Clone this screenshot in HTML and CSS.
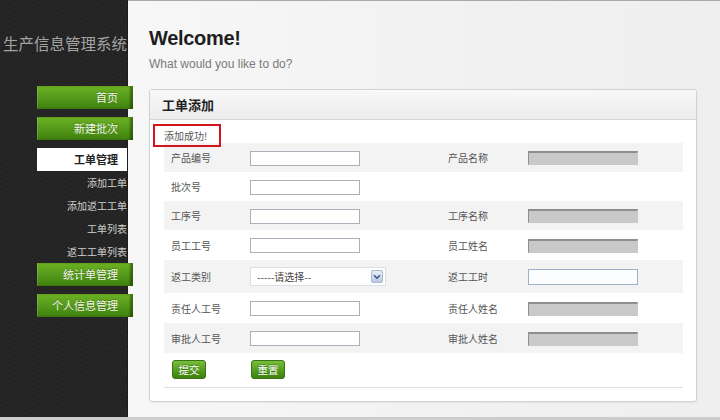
FILE: index.html
```html
<!DOCTYPE html>
<html lang="zh-CN">
<head>
<meta charset="utf-8">
<title>生产信息管理系统</title>
<link rel="stylesheet" href="styles.css">
</head>
<body>
<div class="page">
  <aside class="sidebar">
    <div class="brand">生产信息管理系统</div>
    <nav class="nav">
      <a class="nav-btn">首页</a>
      <a class="nav-btn">新建批次</a>
      <a class="nav-active">工单管理</a>
      <ul class="subnav">
        <li>添加工单</li>
        <li>添加返工工单</li>
        <li>工单列表</li>
        <li>返工工单列表</li>
      </ul>
      <a class="nav-btn">统计单管理</a>
      <a class="nav-btn">个人信息管理</a>
    </nav>
  </aside>
  <main class="main">
    <h1 class="welcome">Welcome!</h1>
    <p class="lead">What would you like to do?</p>
    <section class="panel">
      <div class="panel-head">工单添加</div>
      <div class="panel-body">
        <div class="msg">添加成功!<span class="annot"></span></div>
        <table class="form">
          <tr class="r29 alt">
            <td class="lbl">产品编号</td><td class="fld"><span class="inp"></span></td>
            <td class="lbl">产品名称</td><td class="fld"><span class="inp ro"></span></td>
          </tr>
          <tr class="r29">
            <td class="lbl">批次号</td><td class="fld"><span class="inp"></span></td>
            <td class="lbl"></td><td class="fld"></td>
          </tr>
          <tr class="r29 alt">
            <td class="lbl">工序号</td><td class="fld"><span class="inp"></span></td>
            <td class="lbl">工序名称</td><td class="fld"><span class="inp ro"></span></td>
          </tr>
          <tr class="r30">
            <td class="lbl">员工工号</td><td class="fld"><span class="inp"></span></td>
            <td class="lbl">员工姓名</td><td class="fld"><span class="inp ro"></span></td>
          </tr>
          <tr class="r33 alt">
            <td class="lbl">返工类别</td>
            <td class="fld">
              <div class="select"><span class="sel-text">-----请选择--</span><span class="sel-arrow"><svg width="8" height="6" viewBox="0 0 8 6"><path d="M1 1.2 L4 4.2 L7 1.2" fill="none" stroke="#3d5585" stroke-width="1.6"/></svg></span></div>
            </td>
            <td class="lbl">返工工时</td><td class="fld"><span class="inp blue"></span></td>
          </tr>
          <tr class="r30">
            <td class="lbl">责任人工号</td><td class="fld"><span class="inp"></span></td>
            <td class="lbl">责任人姓名</td><td class="fld"><span class="inp ro"></span></td>
          </tr>
          <tr class="r30 alt">
            <td class="lbl">审批人工号</td><td class="fld"><span class="inp"></span></td>
            <td class="lbl">审批人姓名</td><td class="fld"><span class="inp ro"></span></td>
          </tr>
          <tr class="r34 actions">
            <td class="lbl"><button class="btn">提交</button></td>
            <td class="fld"><button class="btn">重置</button></td>
            <td class="lbl"></td><td class="fld"></td>
          </tr>
        </table>
      </div>
    </section>
  </main>
</div>
</body>
</html>
```
FILE: styles.css
```css
* { box-sizing: border-box; }
html, body { margin: 0; padding: 0; }
body {
  width: 720px;
  height: 420px;
  overflow: hidden;
  font-family: "Liberation Sans", "Noto Sans CJK SC", Arial, sans-serif;
  background: #efefef;
}
.page {
  display: flex;
  height: 420px;
  border-bottom: 3px solid #cdcdcd;
}
.sidebar {
  position: relative;
  z-index: 1;
  width: 128px;
  flex: 0 0 128px;
  background-color: #242424;
  background-image:
    repeating-linear-gradient(37deg, rgba(255,255,255,0.018) 0 1px, transparent 1px 2px),
    repeating-linear-gradient(-53deg, rgba(0,0,0,0.12) 0 1px, transparent 1px 3px);
  border-right: 1px solid #1c1c1c;
}
.brand {
  margin-top: 33px;
  height: 20px;
  line-height: 20px;
  font-family: "Noto Sans CJK SC", sans-serif;
  font-size: 15.5px;
  color: #a3a3a3;
  text-align: right;
  white-space: nowrap;
}
.nav {
  margin-top: 33px;
  padding-left: 37px;
  display: flex;
  flex-direction: column;
  font-family: "Noto Sans CJK SC", sans-serif;
}
.nav-btn {
  display: block;
  height: 23px;
  line-height: 23px;
  margin-right: -6px;
  margin-bottom: 8px;
  padding-right: 15px;
  text-align: right;
  font-size: 11px;
  color: #f2f6ea;
  background: linear-gradient(#6cb222, #53971a 55%, #3f810c);
  box-shadow: inset -3px 0 2px rgba(0,0,0,0.35), inset 1px 0 0 rgba(255,255,255,0.15);
  text-shadow: 0 -1px 0 rgba(0,0,0,0.25);
}
.nav-active {
  display: block;
  height: 23px;
  line-height: 23px;
  padding-right: 9px;
  text-align: right;
  font-size: 11px;
  font-weight: bold;
  color: #222;
  background: #fff;
}
.subnav {
  list-style: none;
  margin: 0;
  padding: 0;
}
.subnav li {
  height: 23px;
  line-height: 23px;
  text-align: right;
  font-size: 10px;
  color: #cfcfcf;
  white-space: nowrap;
}
.main {
  flex: 1;
  border-top: 1px solid #a9a9a9;
  padding: 0 23px 0 21px;
  background: linear-gradient(to right, #f7f7f7, #f1f1f1 60%, #efefef);
}
.welcome {
  margin: 25px 0 0;
  height: 24px;
  line-height: 24px;
  font-size: 20px;
  font-weight: bold;
  color: #1e1e1e;
  letter-spacing: -0.3px;
}
.lead {
  margin: 6px 0 0;
  height: 16px;
  line-height: 16px;
  font-size: 12px;
  color: #7a7a7a;
}
.panel {
  margin-top: 17px;
  width: 548px;
  height: 313px;
  background: #fff;
  border: 1px solid #d2d2d2;
  border-radius: 3px;
  box-shadow: 0 1px 2px rgba(0,0,0,0.06);
  overflow: hidden;
}
.panel-head {
  height: 30px;
  line-height: 29px;
  padding-left: 12px;
  font-family: "Noto Sans CJK SC", sans-serif;
  font-size: 13px;
  font-weight: bold;
  color: #1f1f1f;
  background: linear-gradient(#f8f8f8, #ececec);
  border-bottom: 1px solid #d6d6d6;
}
.panel-body {
  padding: 0 13px 0 14px;
}
.msg {
  position: relative;
  height: 23px;
  padding-top: 10px;
  line-height: 12px;
  font-family: "Noto Sans CJK SC", sans-serif;
  font-size: 10px;
  color: #555;
}
.annot {
  position: absolute;
  left: -11px;
  top: 4px;
  width: 68px;
  height: 23px;
  border: 2px solid #d3161b;
}
.form {
  width: 519px;
  border-collapse: collapse;
  table-layout: fixed;
  font-family: "Noto Sans CJK SC", sans-serif;
  font-size: 10px;
  color: #555;
}
.form td { padding: 0; vertical-align: middle; }
.form td.lbl { padding-left: 7px; }
.form tr td:nth-child(1) { width: 86px; }
.form tr td:nth-child(2) { width: 191px; }
.form tr td:nth-child(3) { width: 87px; }
.form tr td:nth-child(4) { width: 155px; }
.r29 { height: 29px; }
.r30 { height: 30px; }
.r33 { height: 33px; }
.r34 { height: 34px; }
.alt td { background: #f3f3f3; }
.actions td { border-bottom: 1px solid #dedede; }
.inp {
  display: block;
  width: 110px;
  height: 15px;
  margin-top: 1px;
  background: #fff;
  border: 1px solid #a9b1ba;
}
.inp.blue { border-color: #9cb0c8; background: #fbfdff; height: 16px; }
.inp.ro {
  height: 14px;
  background: #c9c9c9;
  border: 1px solid #c9c9c9;
  border-top: 2px solid #8e8e8e;
  border-left: 1px solid #8e8e8e;
}
.select {
  display: flex;
  align-items: center;
  justify-content: space-between;
  width: 136px;
  height: 19px;
  padding: 0 2px 0 6px;
  background: #fff;
  border: 1px solid #dcdfe4;
  font-size: 10px;
  color: #444;
}
.sel-arrow {
  display: flex;
  align-items: center;
  justify-content: center;
  width: 12px;
  height: 13px;
  border: 1px solid #a8b8d0;
  border-radius: 2px;
  background: linear-gradient(#e8eef8, #bccbe2);
}
.btn {
  display: block;
  width: 34px;
  height: 19px;
  padding: 0;
  margin: 0 0 0 1px;
  font-family: "Noto Sans CJK SC", sans-serif;
  font-size: 10.5px;
  color: #fff;
  text-shadow: 0 -1px 0 rgba(0,0,0,0.3);
  background: linear-gradient(#79bd3c, #55a01f 50%, #3d800e);
  border: 1px solid #3b7412;
  border-radius: 3px;
}
```
